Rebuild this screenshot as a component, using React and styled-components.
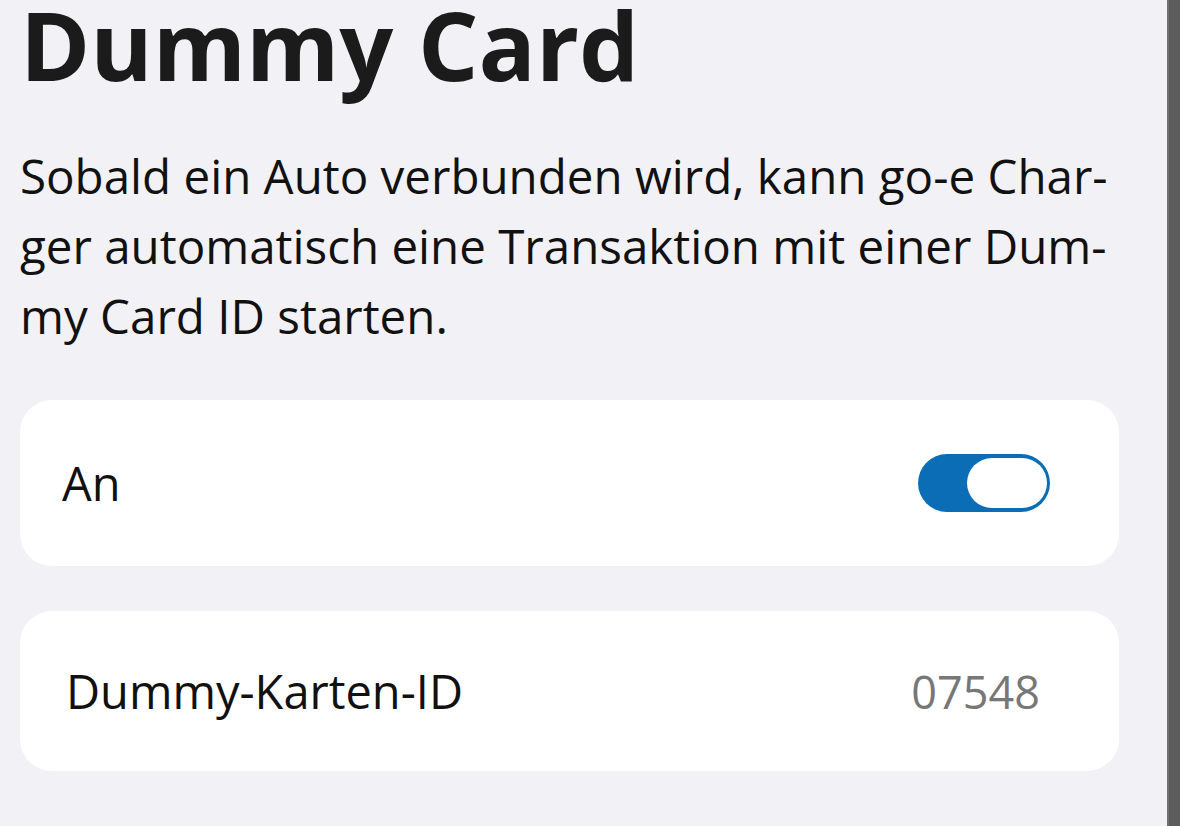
import React from 'react';
import styled, { createGlobalStyle } from 'styled-components';

const GlobalStyle = createGlobalStyle`
  html, body {
    margin: 0;
    padding: 0;
    background: #f2f1f6;
    overflow: hidden;
  }
  body {
    font-family: "Open Sans", "Noto Sans", sans-serif;
    color: #111;
  }
`;

const Screen = styled.div`
  display: flex;
  width: 1180px;
  height: 826px;
  background: #f2f1f6;
`;

const Content = styled.main`
  flex: 1;
  display: flex;
  flex-direction: column;
  padding: 0 48px 0 20px;
`;

const Edge = styled.div`
  width: 13px;
  background: #5c5c5c;
  border-left: 2px solid #6e6e6e;
  box-sizing: border-box;
`;

const Title = styled.h1`
  margin: 0;
  font-size: 95px;
  line-height: 88px;
  font-weight: 700;
  color: #1b1b1b;
`;

const Description = styled.p`
  margin: 53px 0 0;
  font-size: 47.5px;
  line-height: 70px;
  color: #111;
  white-space: nowrap;
`;

const Card = styled.section`
  display: flex;
  align-items: center;
  justify-content: space-between;
  height: ${p => p.h}px;
  margin-top: ${p => p.top}px;
  padding: 0 ${p => p.right}px 0 ${p => p.left}px;
  background: #fff;
  border-radius: 32px;
`;

const Label = styled.span`
  font-size: 47px;
  color: #111;
`;

const Value = styled.span`
  font-size: 45px;
  color: #777;
`;

const Track = styled.div`
  display: flex;
  justify-content: flex-end;
  align-items: center;
  width: 132px;
  height: 58px;
  box-sizing: border-box;
  padding: 0 3px;
  border-radius: 29px;
  background: #0a6db5;
`;

const Knob = styled.div`
  width: 80px;
  height: 50px;
  border-radius: 25px;
  background: #fff;
`;

export default function App() {
  return (
    <Screen>
      <GlobalStyle />
      <Content>
        <Title>Dummy Card</Title>
        <Description>
          Sobald ein Auto verbunden wird, kann go-e Char-<br />
          ger automatisch eine Transaktion mit einer Dum-<br />
          my Card ID starten.
        </Description>
        <Card h={166} top={49} left={42} right={69}>
          <Label>An</Label>
          <Track>
            <Knob />
          </Track>
        </Card>
        <Card h={160} top={45} left={46} right={79}>
          <Label>Dummy-Karten-ID</Label>
          <Value>07548</Value>
        </Card>
      </Content>
      <Edge />
    </Screen>
  );
}
